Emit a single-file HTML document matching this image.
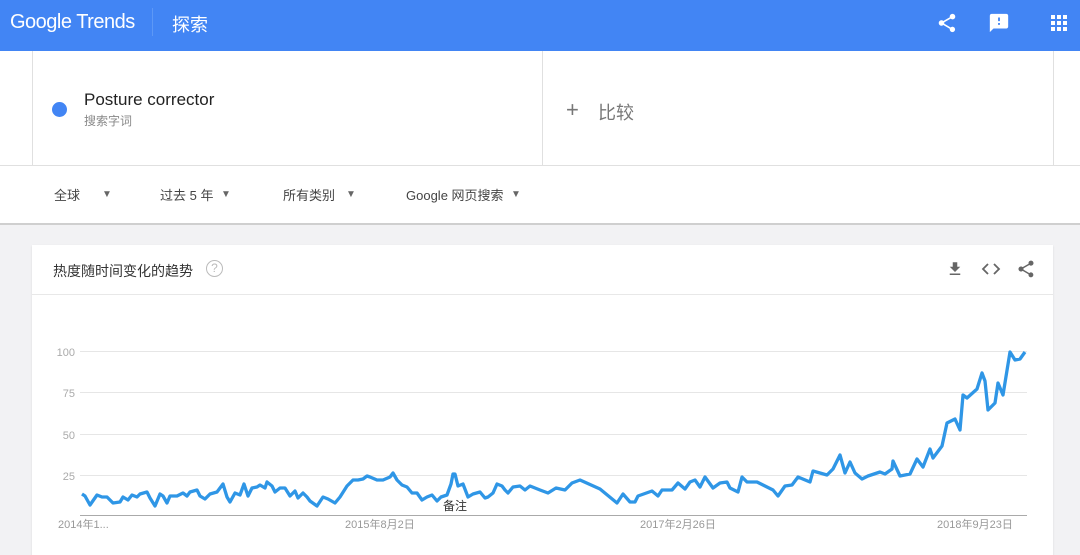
<!DOCTYPE html>
<html><head><meta charset="utf-8"><style>
body{margin:0;width:1080px;height:549px;overflow:hidden;background:#f2f2f4;font-family:"Liberation Sans","Noto Sans CJK SC",sans-serif;position:relative}
.abs{position:absolute}
</style></head><body>
<div class="abs" style="left:0;top:0;width:1080px;height:51px;background:#4285f4"></div>
<div class="abs" style="left:10px;top:11px;color:#fff;font-size:20px;letter-spacing:-0.5px">Google Trends</div>
<div class="abs" style="left:152px;top:8px;width:1px;height:28px;background:#5d98f6"></div>
<div class="abs" style="left:172px;top:11px;color:#fff;font-size:18px">探索</div>
<svg class="abs" style="left:936px;top:12px" width="22" height="22" viewBox="0 0 24 24"><path fill="#fff" d="M18 16.1c-.8 0-1.4.3-2 .8l-7.1-4.2c.1-.2.1-.5.1-.7s0-.5-.1-.7L16 7.2c.5.5 1.2.8 2 .8 1.7 0 3-1.3 3-3s-1.3-3-3-3-3 1.3-3 3c0 .2 0 .5.1.7L8 9.8C7.5 9.3 6.8 9 6 9c-1.7 0-3 1.3-3 3s1.3 3 3 3c.8 0 1.5-.3 2-.8l7.1 4.2c-.1.2-.1.4-.1.6 0 1.600 1.3 2.9 2.9 2.9s2.9-1.3 2.9-2.9-1.3-2.9-2.9-2.9z"/></svg>
<svg class="abs" style="left:988px;top:12px" width="22" height="22" viewBox="0 0 24 24"><path fill="#fff" d="M20 2H4c-1.1 0-2 .9-2 2v18l4-4h14c1.1 0 2-.9 2-2V4c0-1.1-.9-2-2-2zm-7 12h-2v-2h2v2zm0-4h-2V6h2v4z"/></svg>
<svg class="abs" style="left:1051px;top:15px" width="16" height="16" viewBox="0 0 16 16" fill="#fff"><rect x="0" y="0" width="4" height="4"/><rect x="6" y="0" width="4" height="4"/><rect x="12" y="0" width="4" height="4"/><rect x="0" y="6" width="4" height="4"/><rect x="6" y="6" width="4" height="4"/><rect x="12" y="6" width="4" height="4"/><rect x="0" y="12" width="4" height="4"/><rect x="6" y="12" width="4" height="4"/><rect x="12" y="12" width="4" height="4"/></svg>

<div class="abs" style="left:0;top:51px;width:1080px;height:114px;background:#fff"></div>
<div class="abs" style="left:32px;top:51px;width:1px;height:114px;background:#e0e0e0"></div>
<div class="abs" style="left:542px;top:51px;width:1px;height:114px;background:#e0e0e0"></div>
<div class="abs" style="left:1053px;top:51px;width:1px;height:114px;background:#e0e0e0"></div>
<div class="abs" style="left:52px;top:102px;width:15px;height:15px;border-radius:50%;background:#4285f4"></div>
<div class="abs" style="left:84px;top:90px;font-size:17px;color:#222">Posture corrector</div>
<div class="abs" style="left:84px;top:112px;font-size:12px;color:#888">搜索字词</div>
<div class="abs" style="left:566px;top:98px;font-size:22px;color:#777;line-height:24px">+</div>
<div class="abs" style="left:598px;top:99px;font-size:18px;color:#777">比较</div>

<div class="abs" style="left:0;top:165px;width:1080px;height:57px;background:#fff;border-top:1px solid #e0e0e0;border-bottom:2px solid #cfcfcf"></div>
<div class="abs" style="top:185px;left:0;font-size:13px;color:#444;width:1080px">
<span class="abs" style="left:54px;top:0">全球</span><span class="abs" style="left:102px;font-size:10px;top:4px;color:#666">▼</span>
<span class="abs" style="left:160px;top:0">过去 5 年</span><span class="abs" style="left:221px;font-size:10px;top:4px;color:#666">▼</span>
<span class="abs" style="left:283px;top:0">所有类别</span><span class="abs" style="left:346px;font-size:10px;top:4px;color:#666">▼</span>
<span class="abs" style="left:406px;top:0">Google 网页搜索</span><span class="abs" style="left:511px;font-size:10px;top:4px;color:#666">▼</span>
</div>

<div class="abs" style="left:32px;top:245px;width:1021px;height:310px;background:#fff;box-shadow:0 1px 2px rgba(0,0,0,.1)"></div>
<div class="abs" style="left:32px;top:294px;width:1021px;height:1px;background:#e8e8e8"></div>
<div class="abs" style="left:53px;top:261px;font-size:14px;color:#333">热度随时间变化的趋势</div>
<div class="abs" style="left:206px;top:260px;width:15px;height:15px;border:1.5px solid #bbb;border-radius:50%;color:#bbb;font-size:12px;text-align:center;line-height:15px">?</div>
<svg class="abs" style="left:946px;top:260px" width="18" height="18" viewBox="0 0 24 24"><path fill="#666" d="M19 9h-4V3H9v6H5l7 7 7-7zM5 18v2h14v-2H5z"/></svg>
<svg class="abs" style="left:981px;top:262px" width="20" height="14" viewBox="0 0 20 14"><path d="M7 2L2 7l5 5M13 2l5 5-5 5" stroke="#666" stroke-width="1.8" fill="none"/></svg>
<svg class="abs" style="left:1016px;top:259px" width="20" height="20" viewBox="0 0 24 24"><path fill="#666" d="M18 16.1c-.8 0-1.4.3-2 .8l-7.1-4.2c.1-.2.1-.5.1-.7s0-.5-.1-.7L16 7.2c.5.5 1.2.8 2 .8 1.7 0 3-1.3 3-3s-1.3-3-3-3-3 1.3-3 3c0 .2 0 .5.1.7L8 9.8C7.5 9.3 6.8 9 6 9c-1.7 0-3 1.3-3 3s1.3 3 3 3c.8 0 1.5-.3 2-.8l7.1 4.2c-.1.2-.1.4-.1.6 0 1.6 1.3 2.9 2.9 2.9s2.9-1.3 2.9-2.9-1.3-2.9-2.9-2.9z"/></svg>

<svg class="abs" style="left:0;top:0" width="1080" height="549">
<g stroke="#e6e6e6" stroke-width="1"><line x1="80" y1="351.5" x2="1027" y2="351.5"/><line x1="80" y1="392.5" x2="1027" y2="392.5"/><line x1="80" y1="434.5" x2="1027" y2="434.5"/><line x1="80" y1="475.5" x2="1027" y2="475.5"/></g>
<line x1="80" y1="515.5" x2="1027" y2="515.5" stroke="#aaa"/>
<g font-family="Liberation Sans, Noto Sans CJK SC, sans-serif" font-size="11" fill="#aaa" text-anchor="end"><text x="75" y="356">100</text><text x="75" y="397">75</text><text x="75" y="439">50</text><text x="75" y="480">25</text></g>
<g font-family="Liberation Sans, Noto Sans CJK SC, sans-serif" font-size="11" fill="#999"><text x="58" y="528">2014年1...</text><text x="345" y="528">2015年8月2日</text><text x="640" y="528">2017年2月26日</text><text x="937" y="528">2018年9月23日</text></g>
<text x="443" y="510" font-family="Liberation Sans, Noto Sans CJK SC, sans-serif" font-size="12" fill="#333">备注</text>
<polyline fill="none" stroke="#2f96e6" stroke-width="3.3" stroke-linejoin="round" points="82,494 85,496 90,505 97,495 102,497 107,497 113,503 120,502 123,497 128,500 132,495 137,497 140,494 147,492 150,498 155,506 160,494 163,496 167,503 170,496 177,496 183,493 187,496 190,492 197,490 200,496 205,499 210,494 217,492 223,484 227,497 230,502 235,493 240,495 244,484 248,496 252,488 257,487 260,485 265,488 267,482 272,486 275,492 280,488 285,488 290,496 295,491 298,498 303,493 307,497 310,501 317,506 323,497 328,499 335,503 340,497 347,486 353,480 358,480 363,479 367,476 370,477 377,480 383,480 390,477 393,473 397,480 402,485 407,487 412,493 417,493 422,500 427,497 432,495 437,501 441,497 447,495 451,484 453,474 455,474 458,486 463,484 468,497 473,494 480,492 485,498 488,497 493,493 497,484 502,486 505,490 508,493 513,487 520,486 525,490 530,486 540,490 548,493 556,488 565,490 572,483 580,480 600,489 617,503 623,494 630,502 635,502 638,496 652,491 658,496 662,490 672,490 678,483 685,489 690,482 695,480 700,487 705,477 713,488 720,483 727,482 730,488 738,492 742,477 747,482 757,482 763,485 773,490 778,496 785,486 792,485 798,477 810,482 813,471 827,475 833,469 840,455 845,473 850,462 855,473 862,479 868,476 880,472 885,474 892,469 893,461 900,476 910,474 917,459 923,467 930,449 933,458 942,446 947,423 955,419 960,430 963,395 967,398 977,389 982,373 985,381 988,410 995,403 998,383 1003,395 1010,352 1015,360 1020,359 1025,352"/>
</svg>
</body></html>
